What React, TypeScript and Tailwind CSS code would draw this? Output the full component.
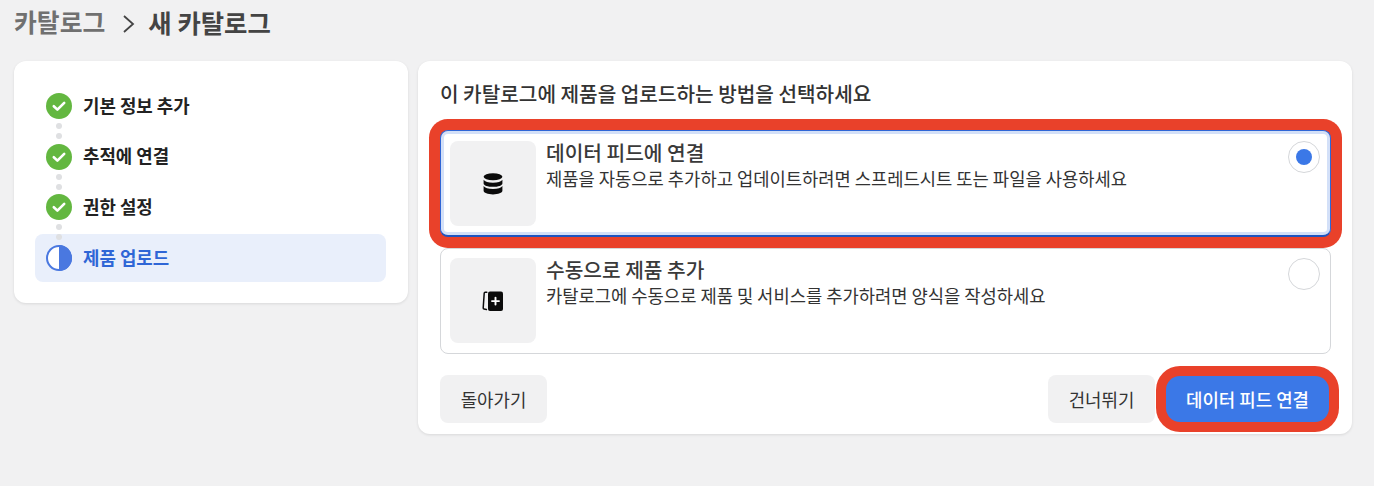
const FONT = '"Noto Sans CJK KR", "Noto Sans", sans-serif';

const STEPS = [
  { label: "기본 정보 추가", state: "done" },
  { label: "추적에 연결", state: "done" },
  { label: "권한 설정", state: "done" },
  { label: "제품 업로드", state: "active" },
];

function StepIcon({ state }: { state: string }) {
  if (state === "active") {
    return (
      <svg width="26" height="26" viewBox="0 0 26 26" className="shrink-0">
        <circle cx="13" cy="13" r="12" fill="#fff" stroke="#4a78e0" strokeWidth="2" />
        <path d="M13 0a13 13 0 0 1 0 26z" fill="#4a78e0" />
      </svg>
    );
  }
  return (
    <svg width="26" height="26" viewBox="0 0 26 26" className="shrink-0">
      <circle cx="13" cy="13" r="13" fill="#63b740" />
      <path d="M7.800 13.200l3.600 3.400 6.800-6.800" fill="none" stroke="#fff" strokeWidth="2.600" strokeLinecap="round" strokeLinejoin="round" />
    </svg>
  );
}

function DatabaseIcon() {
  return (
    <svg width="20" height="22" viewBox="0 0 20 22" fill="#0b0b0b">
      <ellipse cx="10" cy="3.800" rx="9.400" ry="3.500" />
      <path d="M.6 6.700c1.300 1.900 4.700 3 9.400 3s8.100-1.100 9.400-3v3.700c0 2-4.200 3.400-9.400 3.400S.6 12.400.6 10.400z" />
      <path d="M.6 12.900c1.300 1.900 4.700 3 9.400 3s8.100-1.100 9.400-3v4.900c0 2.100-4.200 3.600-9.400 3.600S.6 19.900.6 17.800z" />
    </svg>
  );
}

function CardsIcon() {
  return (
    <svg width="22" height="22" viewBox="0 0 22 22">
      <path d="M4.800 2.200H3.200c-.6 0-1 .4-1 1L1.200 18c0 .6.3 1 .9 1.100L4.400 19.600" fill="none" stroke="#0b0b0b" strokeWidth="1.500" strokeLinecap="round" />
      <rect x="6" y="1.400" width="15" height="19.600" rx="2" fill="#0b0b0b" />
      <path d="M13.500 7.600v7M10 11.100h7" stroke="#fff" strokeWidth="1.900" strokeLinecap="round" />
    </svg>
  );
}

function OptionCard({ title, desc, icon, selected }: { title: string; desc: string; icon: React.ReactNode; selected?: boolean }) {
  return (
    <div
      className={
        selected
          ? "relative z-10 flex h-[107px] rounded-lg border border-b-2 border-[#2f66d6] border-b-[#1f55bf] bg-white pb-[8px] pl-[9px] pr-[10px] pt-[10px] shadow-[inset_0_0_0_3px_#d3e0f8,0_0_0_11px_#e9412a]"
          : "relative flex h-[106px] rounded-lg border border-[#d5d7da] bg-white pb-[9px] pl-[9px] pr-[10px] pt-[9px]"
      }
    >
      <div className="flex h-[85px] w-[86px] shrink-0 items-center justify-center rounded-lg bg-[#f1f1f2]">{icon}</div>
      <div className="ml-[10px] flex-1">
        <div className="-mt-[1px] text-[20.3px] font-medium leading-[24px] text-[#3a3a3a]">{title}</div>
        <div className="mt-[2px] text-[17.7px] leading-[24px] text-[#333]">{desc}</div>
      </div>
      <div className="flex h-8 w-8 shrink-0 items-center justify-center rounded-full border border-[#d5d7da] bg-white">
        {selected && <div className="h-4 w-4 rounded-full bg-[#3b78e7]" />}
      </div>
    </div>
  );
}

export default function App() {
  return (
    <div className="h-[486px] w-[1374px] overflow-hidden bg-[#f1f1f2] px-[14px]" style={{ fontFamily: FONT }}>
      <div className="flex h-[44px] items-center font-semibold text-[#444]">
        <span className="text-[24.8px] text-[#707070]">카탈로그</span>
        <svg width="14" height="20" viewBox="0 0 14 20" className="ml-[17px] mr-[12px] mt-[3px]">
          <path d="M2 2l9 8-9 8" fill="none" stroke="#444" strokeWidth="1.800" />
        </svg>
        <span className="text-[25.4px]">새 카탈로그</span>
      </div>

      <div className="mt-[17px] flex items-start gap-[10px]">
        <div className="flex w-[394px] flex-col gap-[2.67px] rounded-xl bg-white pb-[21px] pl-[21px] pr-[22px] pt-[21px] shadow-[0_1px_3px_rgba(0,0,0,0.1)]">
          {STEPS.map((step, i) => (
            <div
              key={step.label}
              className={`relative flex h-12 items-center gap-[11px] rounded-lg px-[11px] ${step.state === "active" ? "bg-[#e9effb]" : ""}`}
            >
              <StepIcon state={step.state} />
              <span className={`-mt-[2px] text-[17.85px] font-semibold ${step.state === "active" ? "text-[#2f66d6]" : "text-[#222]"}`}>{step.label}</span>
              {i < STEPS.length - 1 && (
                <>
                  <div className="absolute left-[21px] top-[41px] z-10 h-[6px] w-[6px] rounded-full bg-[#dfe0e2]" />
                  <div className="absolute left-[21px] top-[51px] z-10 h-[6px] w-[6px] rounded-full bg-[#dfe0e2]" />
                </>
              )}
            </div>
          ))}
        </div>

        <div className="h-[373px] w-[934px] rounded-xl bg-white px-[22px] pt-[19px] shadow-[0_1px_3px_rgba(0,0,0,0.1)]">
          <div className="text-[20.2px] font-medium leading-[28px] text-[#333]">이 카탈로그에 제품을 업로드하는 방법을 선택하세요</div>
          <div className="mt-[22px] flex w-[891px] flex-col gap-[11px]">
            <OptionCard selected title="데이터 피드에 연결" desc="제품을 자동으로 추가하고 업데이트하려면 스프레드시트 또는 파일을 사용하세요" icon={<DatabaseIcon />} />
            <OptionCard title="수동으로 제품 추가" desc="카탈로그에 수동으로 제품 및 서비스를 추가하려면 양식을 작성하세요" icon={<CardsIcon />} />
          </div>
          <div className="mt-[21px] flex w-[889px] items-center">
            <button className="h-12 w-[107px] rounded-lg bg-[#f1f1f2] text-[17.85px] text-[#333]">돌아가기</button>
            <button className="ml-auto h-12 w-[107px] rounded-lg bg-[#f1f1f2] text-[17.85px] text-[#333]">건너뛰기</button>
            <button className="ml-[11px] h-[46px] w-[163px] rounded-[14px] bg-[#3b78e7] text-[17.85px] font-medium text-white shadow-[0_0_0_10px_#e9412a]">데이터 피드 연결</button>
          </div>
        </div>
      </div>
    </div>
  );
}
